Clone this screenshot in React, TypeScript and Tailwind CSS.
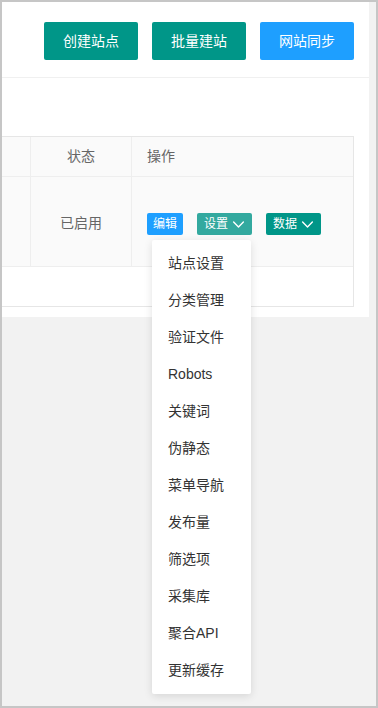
import React from 'react';

const FONT = "font-['Liberation_Sans','Noto_Sans_CJK_SC',sans-serif]";

const MENU_ITEMS = [
  '站点设置',
  '分类管理',
  '验证文件',
  'Robots',
  '关键词',
  '伪静态',
  '菜单导航',
  '发布量',
  '筛选项',
  '采集库',
  '聚合API',
  '更新缓存',
];

const Chevron = () => (
  <svg width="13" height="13" viewBox="0 0 12 12" fill="none" stroke="currentColor" strokeWidth="1.3" strokeLinecap="round" strokeLinejoin="round">
    <path d="M1.5 3.8l4.5 4.4 4.5-4.4" />
  </svg>
);

const TopButton = ({ text, color }: { text: string; color: string }) => (
  <button className={`h-[38px] w-[94px] rounded-[2px] text-[14px] text-white ${color}`}>{text}</button>
);

const App: React.FC = () => {
  return (
    <div className={`relative h-[708px] w-[378px] overflow-hidden border-2 border-[#c6c6c6] bg-[#f2f2f2] ${FONT}`}>
      <div className="w-[367px] bg-white pb-[10px]">
        {/* toolbar */}
        <div className="flex h-[76px] justify-end gap-[14px] border-b border-[#f0f0f0] pr-[15px] pt-[20px]">
          <TopButton text="创建站点" color="bg-[#009688]" />
          <TopButton text="批量建站" color="bg-[#009688]" />
          <TopButton text="网站同步" color="bg-[#1e9fff]" />
        </div>

        {/* table */}
        <div className="mr-[15px] mt-[58px] border-y border-r border-[#e6e6e6]">
          <div className="flex h-[40px] border-b border-[#eeeeee] bg-[#fafafa] text-[14px] text-[#666]">
            <div className="w-[29px] border-r border-[#eeeeee]" />
            <div className="flex w-[101px] items-center justify-center border-r border-[#eeeeee]">状态</div>
            <div className="flex flex-1 items-center pl-[15px]">操作</div>
          </div>
          <div className="flex h-[90px] border-b border-[#eeeeee] bg-[#fafafa] text-[14px] text-[#666]">
            <div className="w-[29px] border-r border-[#eeeeee]" />
            <div className="flex w-[101px] items-center justify-center border-r border-[#eeeeee] pt-[4px]">已启用</div>
            <div className="flex flex-1 items-center gap-[14px] pl-[15px] pt-[5px] text-[12px] text-white">
              <span className="flex h-[22px] w-[36px] items-center justify-center rounded-[2px] bg-[#1e9fff]">编辑</span>
              <span className="flex h-[22px] w-[55px] items-center justify-center gap-[4px] rounded-[2px] bg-[#33a99f]">
                设置 <Chevron />
              </span>
              <span className="flex h-[22px] w-[55px] items-center justify-center gap-[4px] rounded-[2px] bg-[#009688]">
                数据 <Chevron />
              </span>
            </div>
          </div>
          <div className="h-[39px] bg-white" />
        </div>
      </div>

      {/* dropdown menu */}
      <div className="absolute left-[150px] top-[238px] w-[99px] rounded-[2px] bg-white py-[5px] shadow-[0_2px_8px_rgba(0,0,0,0.12)]">
        {MENU_ITEMS.map((item) => (
          <div key={item} className="flex h-[37px] items-center pl-[16px] text-[14px] text-[#333]">
            {item}
          </div>
        ))}
      </div>
    </div>
  );
};

export default App;
